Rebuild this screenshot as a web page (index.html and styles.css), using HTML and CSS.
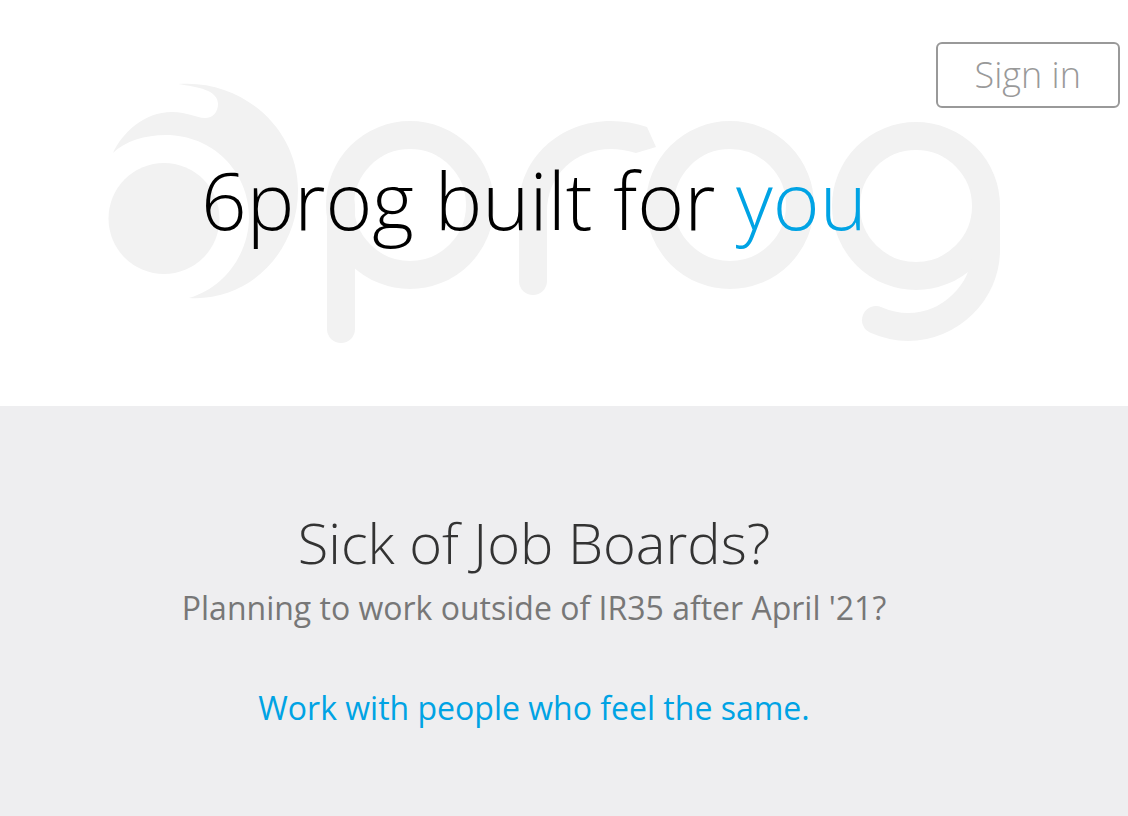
FILE: index.html
```html
<!DOCTYPE html>
<html lang="en">
<head>
<meta charset="utf-8">
<meta name="viewport" content="width=device-width, initial-scale=1">
<title>6prog built for you</title>
<link rel="stylesheet" href="styles.css">
</head>
<body>
<header class="hero">
  <svg class="watermark" viewBox="0 0 1128 406" aria-hidden="true">
    <circle class="fill" cx="164" cy="218.500" r="55.500"/>
    <path class="fill" d="M113 153C122 133 144 112 172 112C188 112 196 118 205 118C213 118 218 112 218 104C218 90 198 87 178 84C243 79 298 129 298 190C298 254 247 302 189 298C224 288 249 254 249 217C249 171 212 135 166 135C145 135 125 141 113 153Z"/>
    <circle class="line" cx="410" cy="205" r="70"/>
    <path class="line" d="M341 205V329"/>
    <path class="fill" d="M519 281V207C519 158 560 121 611 121Q630 121 647 127L656 147L636 153Q622 149 611 149C575 149 547 175 547 212V281A14 14 0 0 1 519 281Z"/>
    <circle class="line" cx="730" cy="205" r="70"/>
    <circle class="line" cx="916" cy="206" r="70"/>
    <path class="line" d="M986 206V250C986 292 950 327 908 327Q892 327 876 320"/>
  </svg>
  <nav class="topbar"><button class="signin" type="button">Sign in</button></nav>
  <h1 class="title">6prog built for <span class="accent">you</span></h1>
</header>
<main class="pitch">
  <h2 class="heading">Sick of Job Boards?</h2>
  <p class="lead">Planning to work outside of IR35 after April '21?</p>
  <p class="lead accent">Work with people who feel the same.</p>
</main>
</body>
</html>
```

FILE: styles.css
```css
* {
  box-sizing: border-box;
}

body {
  display: flex;
  flex-direction: column;
  min-height: 100vh;
  margin: 0;
  background: #fff;
  font-family: "Open Sans", "Liberation Sans", sans-serif;
  text-align: center;
}

.hero {
  position: relative;
  padding: 42px 0 151px;
}

.watermark {
  position: absolute;
  inset: 0;
  width: 100%;
  height: 100%;
}

.fill {
  fill: #f2f2f2;
}

.line {
  fill: none;
  stroke: #f2f2f2;
  stroke-width: 28px;
  stroke-linecap: round;
}

.topbar {
  position: relative;
  display: flex;
  justify-content: flex-end;
  padding: 0 8px;
}

.signin {
  padding: 0 37px;
  border: 2px solid #999;
  border-radius: 6px;
  background: #fff;
  color: #999;
  font-family: inherit;
  font-size: 36px;
  font-weight: 300;
  line-height: 62px;
}

.title {
  position: relative;
  margin: 35px 0 0;
  padding-right: 60px;
  color: #000;
  font-size: 80px;
  font-weight: 300;
  line-height: 112px;
}

.pitch {
  flex: 1;
  padding: 98px 60px 86px 0;
  background: #eeeef0;
}

.heading {
  margin: 0;
  color: #333;
  font-size: 56px;
  font-weight: 300;
  line-height: 76px;
}

.lead {
  margin: 6px 0 56px;
  color: #777;
  font-size: 32px;
  line-height: 44px;
}

.lead:last-child {
  margin: 0;
}

.accent,
.lead.accent {
  color: #00a3e4;
}
```
